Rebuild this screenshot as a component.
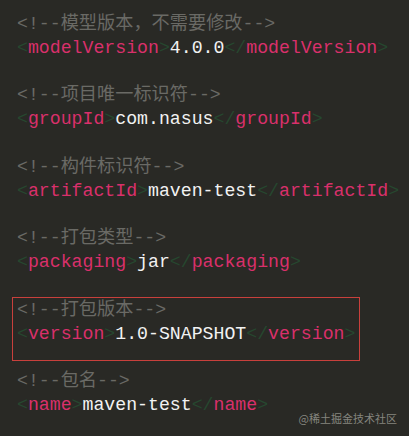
const LINES: { comment: string; tag: string; value: string }[] = [
  { comment: '模型版本，不需要修改', tag: 'modelVersion', value: '4.0.0' },
  { comment: '项目唯一标识符', tag: 'groupId', value: 'com.nasus' },
  { comment: '构件标识符', tag: 'artifactId', value: 'maven-test' },
  { comment: '打包类型', tag: 'packaging', value: 'jar' },
  { comment: '打包版本', tag: 'version', value: '1.0-SNAPSHOT' },
  { comment: '包名', tag: 'name', value: 'maven-test' },
];

const Bracket = ({ children }: { children: string }) => (
  <span className="text-[#26472f]">{children}</span>
);

const App = () => {
  return (
    <div
      className="relative w-[409px] h-[436px] overflow-hidden bg-[#292925] pl-[17px] pt-[13px] text-[18.2px] leading-[23.83px] whitespace-pre"
      style={{ fontFamily: '"Liberation Mono", "Noto Sans CJK SC", monospace' }}
    >
      {LINES.map((l, i) => (
        <div key={l.tag}>
          <div className="text-[#6a6a65]">{`<!--${l.comment}-->`}</div>
          <div>
            <Bracket>{'<'}</Bracket>
            <span className="text-[#d9306b]">{l.tag}</span>
            <Bracket>{'>'}</Bracket>
            <span className="text-[#f2f2f2]">{l.value}</span>
            <Bracket>{'</'}</Bracket>
            <span className="text-[#d9306b]">{l.tag}</span>
            <Bracket>{'>'}</Bracket>
          </div>
          {i < LINES.length - 1 && <div>{' '}</div>}
        </div>
      ))}

      {/* highlight box */}
      <div className="absolute left-[12px] top-[297px] w-[348px] h-[64px] border border-[#c8403c]" />

      {/* watermark */}
      <div
        className="absolute right-[12px] top-[411px] text-[11px] leading-[14px] text-[#85857f]"
        style={{ fontFamily: '"Noto Sans CJK SC", "Noto Sans", sans-serif' }}
      >
        @稀土掘金技术社区
      </div>
    </div>
  );
};

export default App;
